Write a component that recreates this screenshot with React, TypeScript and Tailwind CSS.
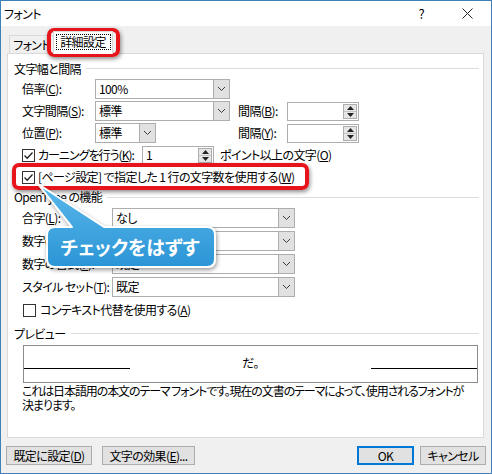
import React from "react";

const font = "font-['Noto_Sans_CJK_JP','Noto_Sans',sans-serif] [font-feature-settings:'palt']";

function Chevron() {
  return (
    <svg width="9" height="6" viewBox="0 0 9 6">
      <path d="M1 1 L4.5 4.5 L8 1" fill="none" stroke="#3c3c3c" strokeWidth="1" />
    </svg>
  );
}

function Combo({ w, text }: { w: string; text?: string }) {
  return (
    <div className={`flex h-[20px] shrink-0 ${w} border border-[#adadad] bg-white`}>
      <div className="flex flex-1 items-center pl-[3px] text-[12px] leading-none">{text}</div>
      <div className="flex w-[16px] items-center justify-center border-l border-[#adadad] bg-[#e1e1e1]">
        <Chevron />
      </div>
    </div>
  );
}

function Spinner({ w, text }: { w: string; text?: string }) {
  return (
    <div className={`flex h-[19px] shrink-0 ${w} border border-[#adadad] bg-white`}>
      <div className="flex flex-1 items-center pl-[3px] text-[12px] leading-none">{text}</div>
      <div className="my-[1px] mr-[1px] flex w-[14px] flex-col border border-[#adadad] bg-[#e6e6e6]">
        <div className="flex flex-1 items-center justify-center border-b border-[#c4c4c4]">
          <svg width="7" height="4" viewBox="0 0 7 4"><path d="M0 4 L3.5 0 L7 4 Z" fill="#222" /></svg>
        </div>
        <div className="flex flex-1 items-center justify-center">
          <svg width="7" height="4" viewBox="0 0 7 4"><path d="M0 0 L3.5 4 L7 0 Z" fill="#222" /></svg>
        </div>
      </div>
    </div>
  );
}

function Check({ on }: { on?: boolean }) {
  return (
    <svg width="13" height="13" viewBox="0 0 13 13" className="shrink-0">
      <rect x="0.5" y="0.5" width="12" height="12" fill="#fff" stroke="#333" />
      {on && <path d="M2.5 6.5 L5.2 9.2 L10.5 3.5" fill="none" stroke="#222" strokeWidth="1.3" />}
    </svg>
  );
}

function GroupLabel({ children, h }: { children: React.ReactNode; h: string }) {
  return (
    <div className={`flex ${h} items-center pl-[6px] pr-[4px]`}>
      <span className="text-[12px] leading-none">{children}</span>
      <div className="ml-[5px] h-px flex-1 bg-[#dcdcdc]" />
    </div>
  );
}

function Btn({ w, children, primary }: { w: string; children: React.ReactNode; primary?: boolean }) {
  return (
    <div
      className={`flex h-[19px] ${w} items-center justify-center text-[12px] leading-none bg-[#e1e1e1] ${
        primary ? "border-2 border-[#0078d7]" : "border border-[#adadad]"
      }`}
    >
      {children}
    </div>
  );
}

export default function App() {
  return (
    <div className={`relative flex h-[474px] w-[492px] flex-col overflow-hidden whitespace-nowrap border border-[#3f7fba] bg-[#f0f0f0] tracking-[-0.6px] text-black ${font}`}>
      {/* Title bar */}
      <div className="flex h-[25px] items-center bg-white pl-[3px] text-[12px]">
        <span>フォント</span>
        <span className="ml-auto mr-[38px] text-[13px]">?</span>
        <svg width="11" height="11" viewBox="0 0 11 11" className="mr-[18px]">
          <path d="M0.5 0.5 L10.5 10.5 M10.5 0.5 L0.5 10.5" stroke="#222" strokeWidth="1" />
        </svg>
      </div>

      {/* Tabs */}
      <div className="flex h-[27px] items-end pl-[8px]">
        <div className="flex h-[18px] w-[44px] items-center justify-center border-l border-t border-[#d9d9d9] text-[12px] leading-none">
          フォント
        </div>
        <div className="relative z-10 -mb-px flex h-[23px] w-[60px] items-start justify-center border-x border-t border-[#d9d9d9] bg-white pt-[2px]">
          <div className="flex h-[16px] w-[55px] items-center justify-center border border-dotted border-black text-[12px] leading-none">
            詳細設定
          </div>
        </div>
      </div>

      {/* Panel */}
      <div className="ml-[6px] mr-[7px] flex h-[385px] flex-col border border-[#d9d9d9] bg-white pt-[6px]">
        <GroupLabel h="h-[17px]">文字幅と間隔</GroupLabel>
        <div className="h-[1px]" />
        <div className="flex h-[22px] items-center pl-[14px] text-[12px]">
          <span className="w-[73px]">倍率(<u>C</u>):</span>
          <Combo w="w-[135px]" text="100%" />
        </div>
        <div className="flex h-[22px] items-center pl-[14px] text-[12px]">
          <span className="w-[73px]">文字間隔(<u>S</u>):</span>
          <Combo w="w-[135px]" text="標準" />
          <span className="ml-[8px] w-[49px]">間隔(<u>B</u>):</span>
          <Spinner w="w-[72px]" />
        </div>
        <div className="flex h-[22px] items-center pl-[14px] text-[12px]">
          <span className="w-[73px]">位置(<u>P</u>):</span>
          <Combo w="w-[61px]" text="標準" />
          <span className="ml-[82px] w-[49px]">間隔(<u>Y</u>):</span>
          <Spinner w="w-[72px]" />
        </div>
        <div className="flex h-[22px] items-center pl-[14px] text-[12px]">
          <Check on />
          <span className="ml-[3px] w-[104px] tracking-[-1px]">カーニングを行う(<u>K</u>):</span>
          <Spinner w="w-[72px]" text="1" />
          <span className="ml-[6px]">ポイント以上の文字(<u>O</u>)</span>
        </div>
        <div className="flex h-[22px] items-center pl-[14px] text-[12px]">
          <Check on />
          <span className="ml-[3px]">[ページ設定] で指定した 1 行の文字数を使用する(<u>W</u>)</span>
        </div>

        <GroupLabel h="h-[18px]">OpenType の機能</GroupLabel>
        <div className="flex h-[23px] items-center pl-[14px] text-[12px]">
          <span className="w-[90px]">合字(<u>L</u>):</span>
          <Combo w="w-[183px]" text="なし" />
        </div>
        <div className="flex h-[23px] items-center pl-[14px] text-[12px]">
          <span className="w-[90px]">数字の間隔(<u>M</u>):</span>
          <Combo w="w-[183px]" text="既定" />
        </div>
        <div className="flex h-[23px] items-center pl-[14px] text-[12px]">
          <span className="w-[90px]">数字の書式(<u>F</u>):</span>
          <Combo w="w-[183px]" text="既定" />
        </div>
        <div className="flex h-[23px] items-center pl-[14px] text-[12px]">
          <span className="w-[90px]">スタイル セット(<u>T</u>):</span>
          <Combo w="w-[183px]" text="既定" />
        </div>
        <div className="flex h-[24px] items-center pl-[15px] text-[12px]">
          <Check />
          <span className="ml-[4px]">コンテキスト代替を使用する(<u>A</u>)</span>
        </div>

        <div className="h-[3px]" />
        <GroupLabel h="h-[17px]">プレビュー</GroupLabel>
        <div className="h-[3px]" />
        <div className="ml-[15px] mr-[5px] flex h-[38px] items-center border border-[#8c8c8c] bg-white">
          <div className="mt-[9px] h-px w-[106px] bg-black" />
          <div className="flex flex-1 justify-center pb-[2px] text-[12px]">だ。</div>
          <div className="mt-[9px] h-px w-[106px] bg-black" />
        </div>
        <div className="pl-[14px] pt-[1px] text-[12px] leading-[14px] tracking-[-1.1px]">
          これは日本語用の本文のテーマ フォントです。現在の文書のテーマによって、使用されるフォントが
          <br />
          決まります。
        </div>
      </div>

      {/* Buttons */}
      <div className="flex items-center px-[5px] pt-[8px]">
        <Btn w="w-[86px]">既定に設定(<u>D</u>)</Btn>
        <div className="ml-[10px]">
          <Btn w="w-[93px]">文字の効果(<u>E</u>)...</Btn>
        </div>
        <div className="ml-auto flex gap-[6px]">
          <Btn w="w-[57px]" primary>OK</Btn>
          <Btn w="w-[66px]">キャンセル</Btn>
        </div>
      </div>

      {/* Red highlights */}
      <div className="pointer-events-none absolute left-[46px] top-[27px] h-[29px] w-[73px] rounded-[7px] border-[4px] border-[#e8141c] shadow-[1px_2px_4px_rgba(0,0,0,0.45)]" />
      <div className="pointer-events-none absolute left-[11px] top-[162px] h-[27px] w-[297px] rounded-[7px] border-[4px] border-[#e8141c] shadow-[1px_2px_4px_rgba(0,0,0,0.45)]" />

      {/* Callout */}
      <svg className="pointer-events-none absolute left-0 top-0" width="492" height="474" viewBox="-1 -1 492 474">
        <defs>
          <linearGradient id="cg" x1="0" y1="0" x2="0" y2="1">
            <stop offset="0" stopColor="#5ab8ea" />
            <stop offset="1" stopColor="#2b95d6" />
          </linearGradient>
          <filter id="sh" x="-20%" y="-20%" width="140%" height="160%">
            <feDropShadow dx="1" dy="2" stdDeviation="2" floodColor="#000" floodOpacity="0.4" />
          </filter>
        </defs>
        <path
          d="M53 225 L70 225 L36 182 L102 225 L205 225 Q213 225 213 233 L213 257 Q213 265 205 265 L53 265 Q45 265 45 257 L45 233 Q45 225 53 225 Z"
          fill="url(#cg)"
          stroke="#fff"
          strokeWidth="2"
          strokeLinejoin="round"
          filter="url(#sh)"
        />
      </svg>
      <div className="pointer-events-none absolute left-[45px] top-[225px] flex h-[40px] w-[168px] items-center justify-center text-[19px] font-bold leading-none tracking-normal text-white">
        チェックをはずす
      </div>
    </div>
  );
}
